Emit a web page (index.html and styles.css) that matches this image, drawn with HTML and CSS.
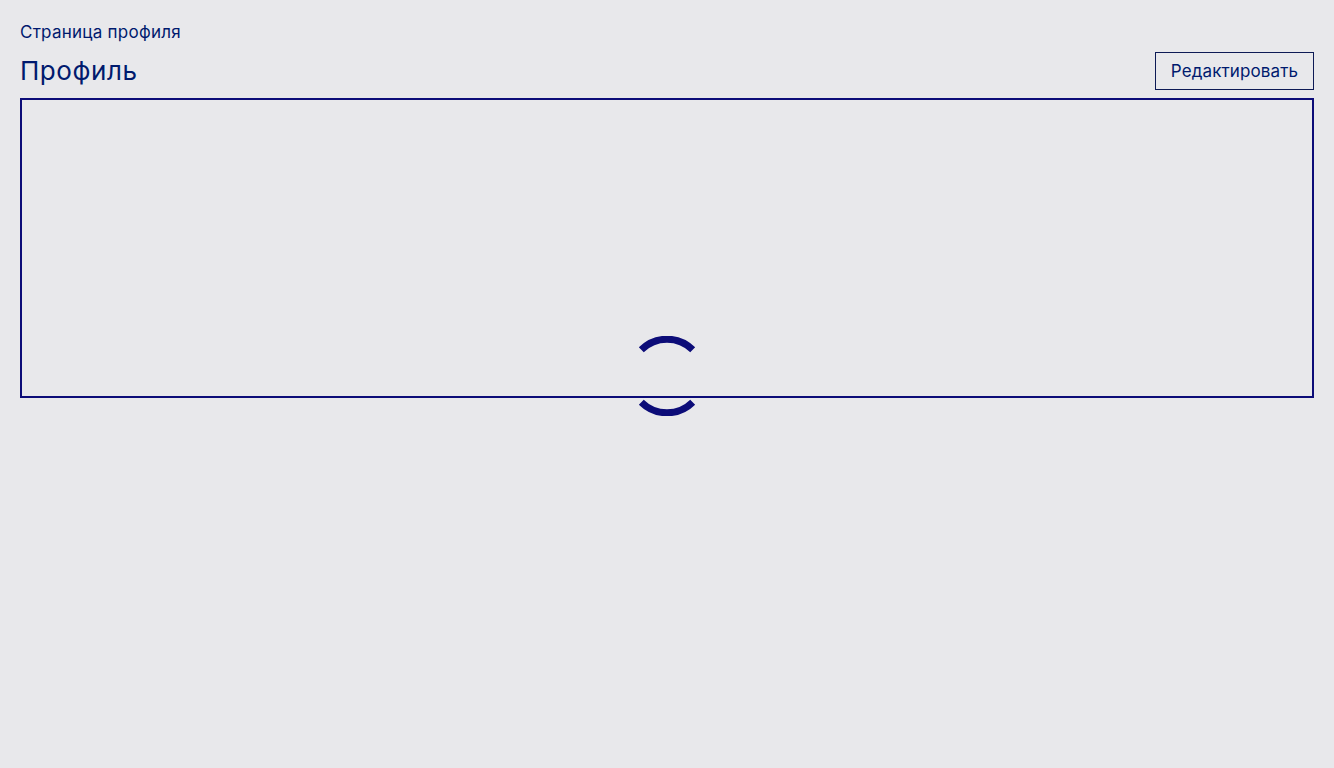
FILE: index.html
```html
<!DOCTYPE html>
<html lang="ru">
<head>
<meta charset="utf-8">
<title>Профиль</title>
<link rel="stylesheet" href="styles.css">
</head>
<body>
<main class="page">
  <p class="crumb">Страница профиля</p>
  <div class="head">
    <h1 class="title">Профиль</h1>
    <button class="edit" type="button">Редактировать</button>
  </div>
  <section class="panel">
    <div class="spinner">
      <svg width="80" height="80" viewBox="0 0 80 80">
        <path class="arc" d="M14.3 13.8A36.5 36.5 0 0 1 65.7 13.8"/>
        <path class="arc" d="M14.3 66.2A36.5 36.5 0 0 0 65.7 66.2"/>
      </svg>
    </div>
  </section>
</main>
</body>
</html>
```
FILE: styles.css
```css
* { box-sizing: border-box; }
html, body { margin: 0; height: 100%; }
body {
  background: #e8e8eb;
  color: #001a6e;
  font-family: "Inter", "Noto Sans", sans-serif;
}
.page { padding: 20px; }
.crumb { margin: 0; font-size: 17px; line-height: 24px; height: 32px; letter-spacing: 0.25px; }
.head { display: flex; justify-content: space-between; align-items: center; height: 38px; margin-bottom: 8px; }
.title { margin: 0; font-size: 26px; font-weight: 400; line-height: 38px; height: 38px; letter-spacing: 0.55px; }
.edit {
  width: 159px; height: 38px; padding: 0 0 1px;
  background: transparent; color: #001a6e;
  border: 1px solid #0d1a55;
  font: 400 17px "Inter", "Noto Sans", sans-serif;
  letter-spacing: 0.13px;
}
.panel {
  height: 300px;
  border: 2px solid #0c0c78;
  display: flex; justify-content: center; padding-top: 236px;
}
.spinner { width: 60px; height: 80px; display: flex; justify-content: center; flex: none; }
.spinner svg { flex: none; display: block; }
.arc { fill: none; stroke: #0c0c78; stroke-width: 7; }
```
